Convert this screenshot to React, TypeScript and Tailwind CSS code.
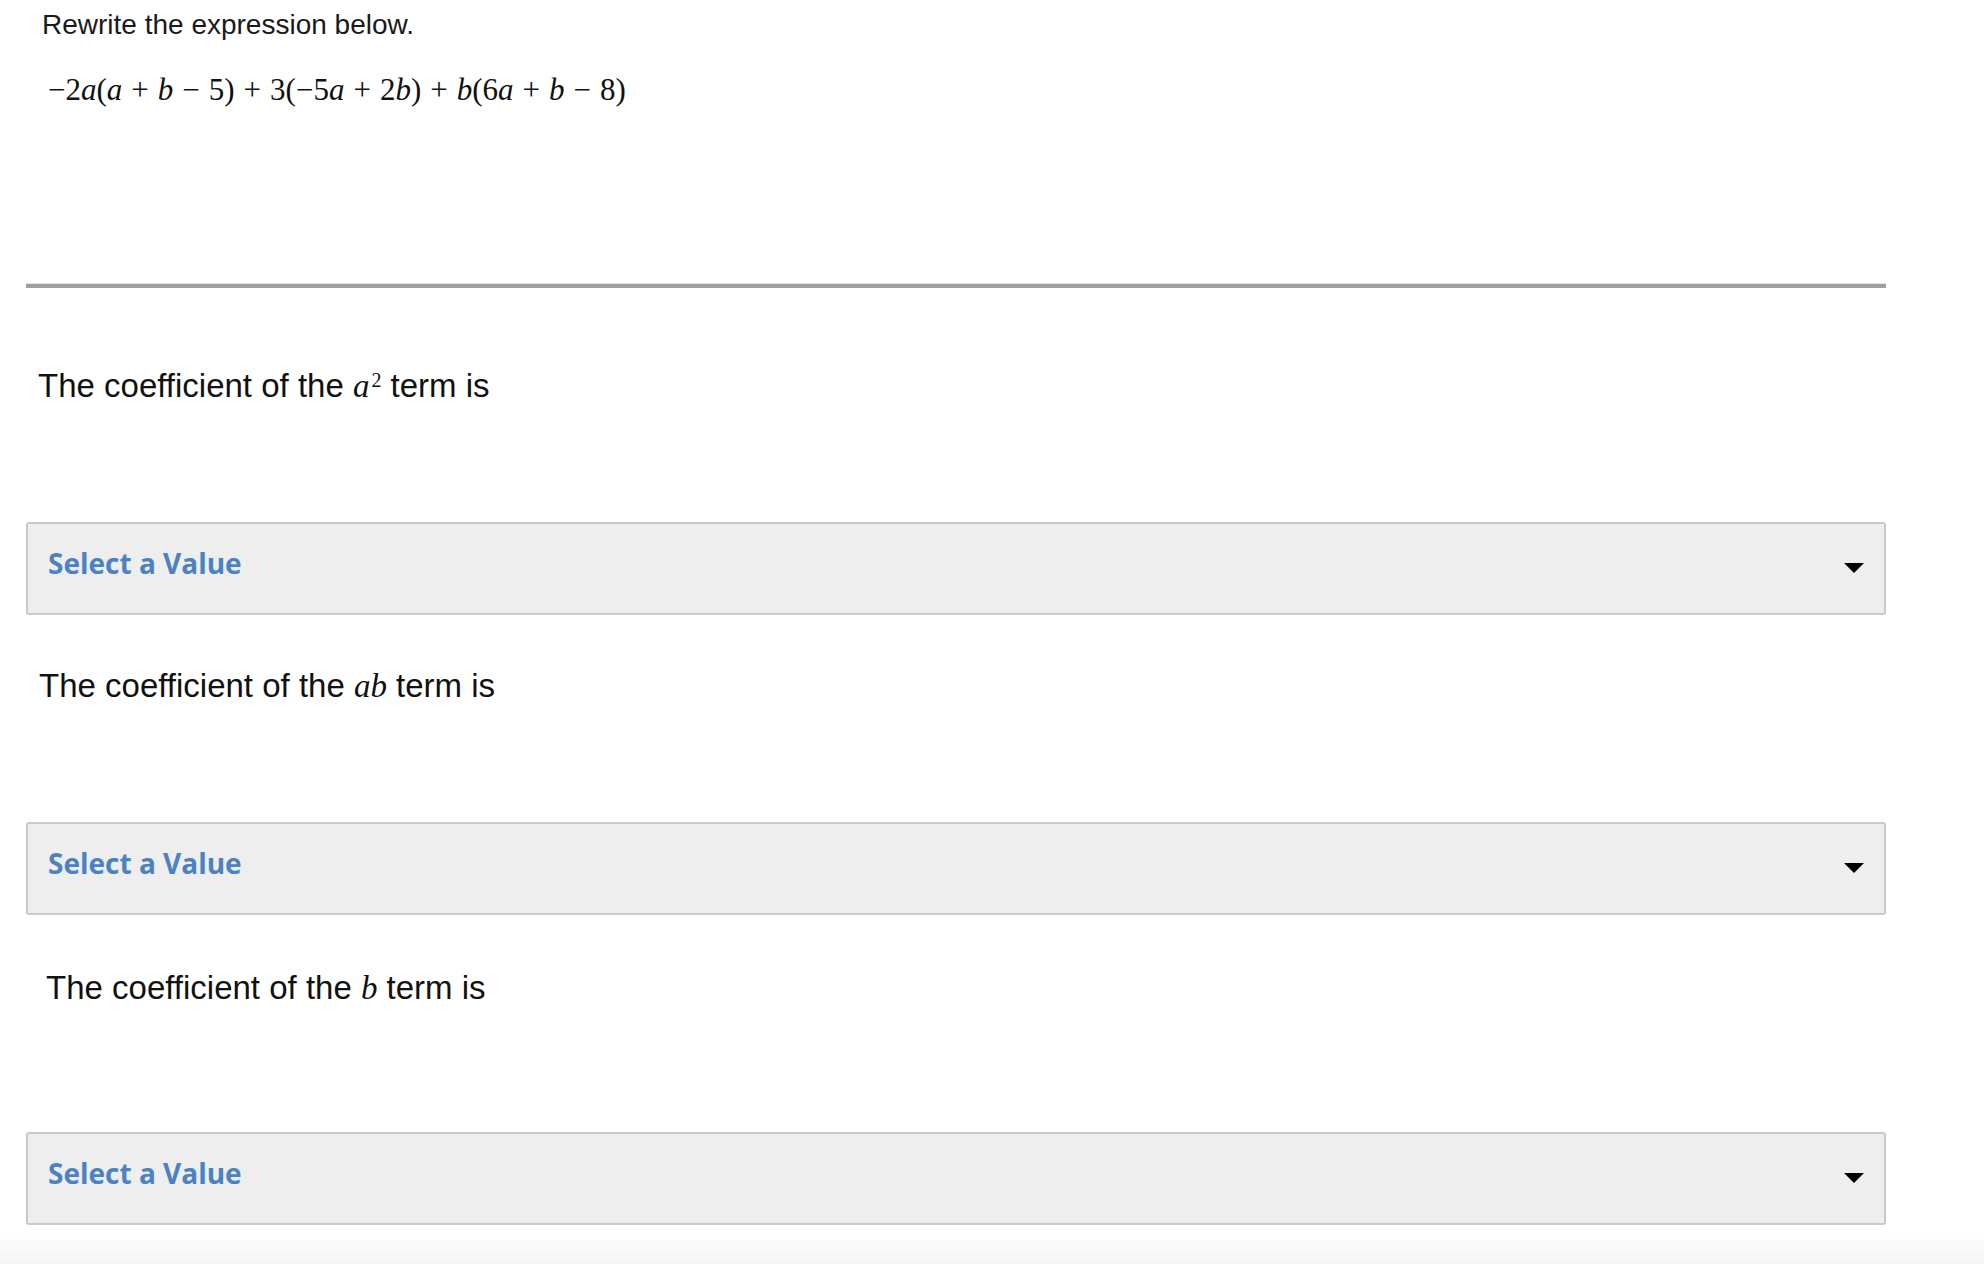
import React from 'react'

const serif = "font-['Liberation_Serif',serif]"

function V({ children }: { children: React.ReactNode }) {
  return <span className={`${serif} italic`}>{children}</span>
}

function Op({ children }: { children: React.ReactNode }) {
  return <span className="mx-[9px]">{children}</span>
}

function SelectBox({ className = '' }: { className?: string }) {
  return (
    <div
      className={`flex h-[93px] items-center justify-between rounded-[3px] border-2 border-[#cacaca] bg-[#eeeeee] pl-[20px] pr-[20px] pb-[11px] ${className}`}
    >
      <span className="font-['Open_Sans',sans-serif] text-[28px] font-bold leading-none text-[#4a82c2]">
        Select a Value
      </span>
      <svg width="20" height="10" viewBox="0 0 20 10" className="mt-[9px]">
        <path d="M0 0 H20 L10 10 Z" fill="#000" />
      </svg>
    </div>
  )
}

function Prompt({ className = '', children }: { className?: string; children: React.ReactNode }) {
  return (
    <p className={`font-['Liberation_Sans',Arial,sans-serif] text-[33px] leading-[40px] text-[#111] ${className}`}>
      {children}
    </p>
  )
}

export default function App() {
  return (
    <div className="flex min-h-screen flex-col bg-white">
      <div className="w-[1886px] pl-[26px]">
        <p className="mt-[8px] pl-[16px] font-['Liberation_Sans',Arial,sans-serif] text-[28px] leading-[34px] text-[#1a1a1a]">
          Rewrite the expression below.
        </p>

        <p className={`mt-[28px] pl-[22px] ${serif} text-[31px] leading-[40px] text-[#111]`}>
          −2<V>a</V>(<V>a</V>
          <Op>+</Op>
          <V>b</V>
          <Op>−</Op>5)
          <Op>+</Op>3(−5<V>a</V>
          <Op>+</Op>2<V>b</V>)
          <Op>+</Op>
          <V>b</V>(6<V>a</V>
          <Op>+</Op>
          <V>b</V>
          <Op>−</Op>8)
        </p>

        <div className="mt-[173px] h-[5px] border-t border-[#e4e4e4] bg-[#a0a0a0]" />

        <Prompt className="mt-[78px] pl-[12px]">
          The coefficient of the <V>a</V>
          <sup className={`${serif} ml-[2px] text-[20px]`}>2</sup> term is
        </Prompt>
        <SelectBox className="mt-[116px]" />

        <Prompt className="mt-[51px] pl-[13px]">
          The coefficient of the <V>ab</V> term is
        </Prompt>
        <SelectBox className="mt-[116px]" />

        <Prompt className="mt-[53px] pl-[20px]">
          The coefficient of the <V>b</V> term is
        </Prompt>
        <SelectBox className="mt-[124px]" />
      </div>
      <div className="mt-[3px] flex-1 bg-gradient-to-b from-white to-[#f5f5f5]" />
    </div>
  )
}
